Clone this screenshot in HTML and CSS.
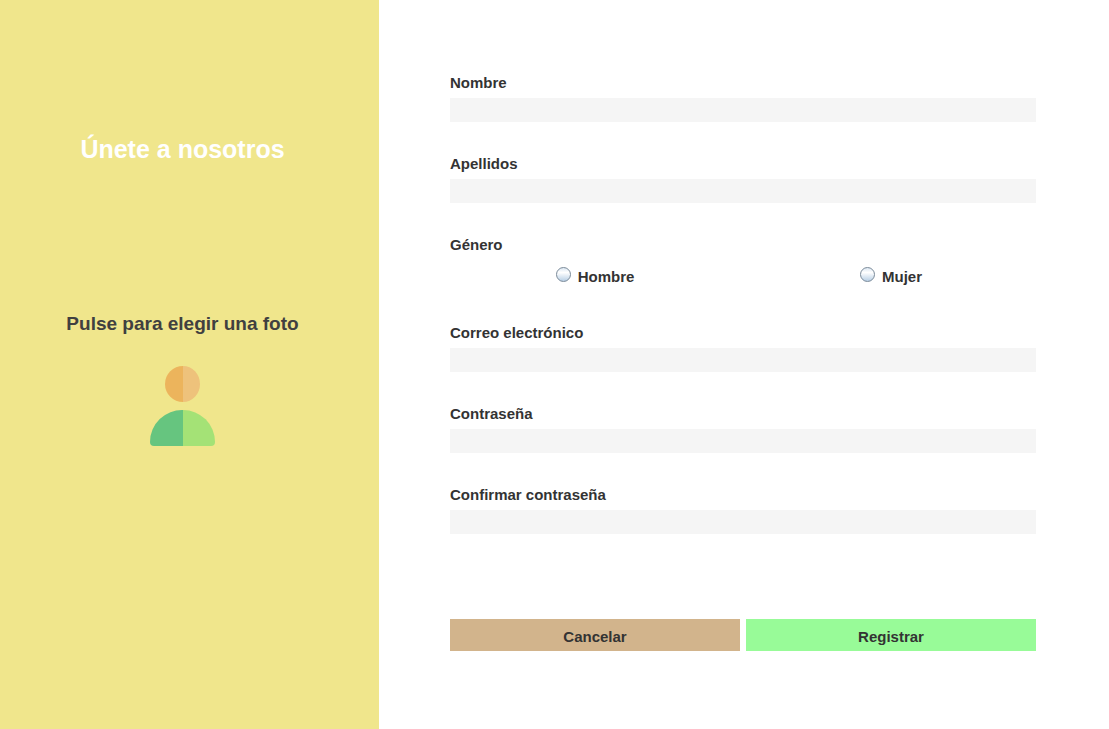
FILE: index.html
```html
<!DOCTYPE html>
<html lang="es">
<head>
<meta charset="utf-8">
<title>Registro</title>
<link rel="stylesheet" href="styles.css">
</head>
<body>
<main class="page">
  <section class="aside">
    <h1 class="title">Únete a nosotros</h1>
    <button class="photo" type="button">
      <span class="photo-text">Pulse para elegir una foto</span>
      <svg class="avatar" viewBox="0 0 65 80" aria-hidden="true">
        <path fill="#ecb45c" d="M33 0A18 18 0 0 0 33 36Z"/>
        <path fill="#eec27b" d="M33 0A17 18 0 0 1 33 36Z"/>
        <path fill="#66c57f" d="M33 44A32 32 0 0 0 0 76Q0 80 4 80H33Z"/>
        <path fill="#a4e276" d="M33 44A32 32 0 0 1 65 76Q65 80 61 80H33Z"/>
      </svg>
    </button>
  </section>
  <form class="form">
    <div class="field"><label for="nombre">Nombre</label><input class="text" id="nombre" type="text"></div>
    <div class="field"><label for="apellidos">Apellidos</label><input class="text" id="apellidos" type="text"></div>
    <fieldset class="gender">
      <legend>Género</legend>
      <div class="options">
        <label class="option"><input class="radio" type="radio" name="genero"><span>Hombre</span></label>
        <label class="option"><input class="radio" type="radio" name="genero"><span>Mujer</span></label>
      </div>
    </fieldset>
    <div class="field"><label for="correo">Correo electrónico</label><input class="text" id="correo" type="email"></div>
    <div class="field"><label for="clave">Contraseña</label><input class="text" id="clave" type="password"></div>
    <div class="field"><label for="confirmar">Confirmar contraseña</label><input class="text" id="confirmar" type="password"></div>
    <div class="actions">
      <button class="btn cancel" type="button">Cancelar</button>
      <button class="btn submit" type="submit">Registrar</button>
    </div>
  </form>
</main>
</body>
</html>
```
FILE: styles.css
```css
* { box-sizing: border-box; }
body { margin: 0; font: bold 15px/18px "Liberation Sans", Arial, sans-serif; color: #333; background: #fff; }
.page { display: flex; min-height: 100vh; }
.aside { flex: 0 0 379px; display: flex; flex-direction: column; align-items: center; padding: 134px 14px 0 0; background: #f0e68c; }
.title { margin: 0; font-size: 25px; line-height: 30px; color: #fff; }
.photo { display: flex; flex-direction: column; align-items: center; gap: 32px; margin-top: 149px; padding: 0; border: 0; background: none; font: inherit; color: #404040; cursor: pointer; }
.photo-text { font-size: 19px; line-height: 21px; }
.avatar { width: 65px; height: 80px; }
.form { flex: 1; padding: 74px 73px 40px 71px; }
.field { display: flex; flex-direction: column; gap: 6px; margin-bottom: 33px; }
.text { width: 100%; height: 24px; padding: 2px 6px; border: 0; background: #f5f5f5; font: inherit; }
.gender { margin: 0 0 38px; padding: 0; border: 0; }
.gender legend { padding: 0; }
.options { display: grid; grid-template-columns: 1fr 1fr; gap: 6px; padding-top: 13px; }
.option { display: flex; justify-content: center; gap: 7px; }
.option span { padding-top: 1px; }
.radio { appearance: none; flex: none; width: 15px; height: 15px; margin: 0; border: 1px solid #7a8a99; border-radius: 50%; background: linear-gradient(#dde8f3, #fff 35%, #b8cfe5); }
.actions { display: grid; grid-template-columns: 1fr 1fr; gap: 6px; padding-top: 52px; }
.btn { height: 32px; padding: 4px 0 0; border: 0; font: inherit; color: #333; cursor: pointer; }
.cancel { background: #d2b48c; }
.submit { background: #98fb98; }
```
